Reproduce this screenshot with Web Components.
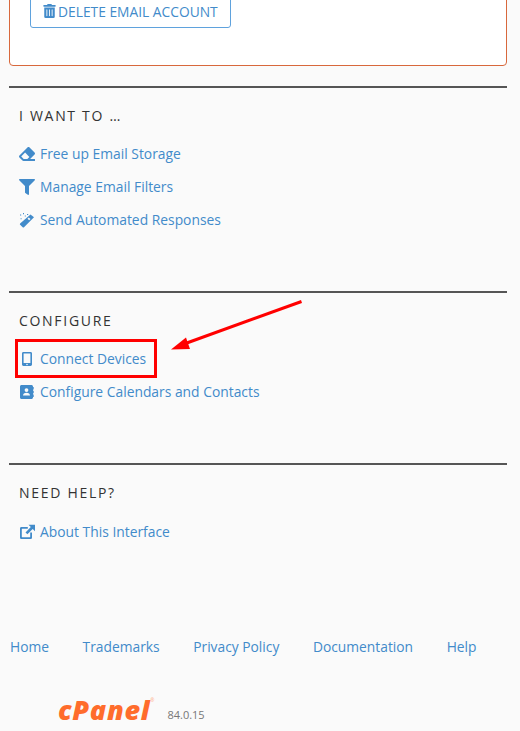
<!DOCTYPE html>
<html lang="en">
<head>
<meta charset="UTF-8">
<title>Email Account</title>
<style>
  html, body { margin: 0; height: 731px; overflow: hidden; background: #fafafa; }
  body { font-family: "Open Sans", sans-serif; font-size: 13.85px; position: relative; }
</style>
</head>
<body>

<danger-card>
  <action-button>
    <svg slot="icon" viewBox="0 0 448 512"><path d="M32 464a48 48 0 0 0 48 48h288a48 48 0 0 0 48-48V128H32zm272-256a16 16 0 0 1 32 0v224a16 16 0 0 1-32 0zm-96 0a16 16 0 0 1 32 0v224a16 16 0 0 1-32 0zm-96 0a16 16 0 0 1 32 0v224a16 16 0 0 1-32 0zM432 32H312l-9.4-18.7A24 24 0 0 0 281.1 0H166.8a23.72 23.72 0 0 0-21.4 13.3L136 32H16A16 16 0 0 0 0 48v32a16 16 0 0 0 16 16h416a16 16 0 0 0 16-16V48a16 16 0 0 0-16-16z"/></svg>
    DELETE EMAIL ACCOUNT
  </action-button>
</danger-card>

<side-section heading="I WANT TO …" style="height:205px">
  <icon-link>
    <svg slot="icon" viewBox="0 0 512 512"><path d="M497.941 273.941c18.745-18.745 18.745-49.137 0-67.882l-160-160c-18.745-18.745-49.136-18.746-67.883 0l-256 256c-18.745 18.745-18.745 49.137 0 67.882l96 96A48.004 48.004 0 0 0 144 480h356c6.627 0 12-5.373 12-12v-40c0-6.627-5.373-12-12-12H355.883l142.058-142.059zm-302.627-62.627l137.373 137.373L265.373 416H150.628l-80-80 124.686-124.686z"/></svg>
    Free up Email Storage
  </icon-link>
  <icon-link>
    <svg slot="icon" viewBox="0 0 512 512"><path d="M487.976 0H24.028C2.71 0-8.047 25.866 7.058 40.971L192 225.941V432c0 7.831 3.821 15.17 10.237 19.662l80 55.98C298.02 518.69 320 507.493 320 487.98V225.941l184.947-184.97C520.021 25.896 509.338 0 487.976 0z"/></svg>
    Manage Email Filters
  </icon-link>
  <icon-link>
    <svg slot="icon" viewBox="0 0 16 16"><path d="M11.500 2.400 15 5.200 5 15.200a1 1 0 0 1-1.300 0L1.100 12.800a1 1 0 0 1 0-1.300z"/><path d="M1 2.400h1.200v1H1zM4 1h1v1.200H4zM8 2h1.200v1H8zM5.800 3.400h1v1h-1zM1.600 6.200h1v1h-1z"/><path d="M9.700 5.600 11.500 7 10.200 8.300 8.500 6.800z" fill="#fafafa"/></svg>
    Send Automated Responses
  </icon-link>
</side-section>

<side-section heading="CONFIGURE" style="height:172px">
  <icon-link>
    <svg slot="icon" viewBox="0 0 16 16"><path fill-rule="evenodd" d="M4.400 1h7.200C12.400 1 13 1.600 13 2.400v11.200c0 .8-.6 1.400-1.400 1.400H4.400C3.600 15 3 14.400 3 13.600V2.400C3 1.600 3.600 1 4.400 1zM4.600 2.600v9.400h6.800V2.600zM8 12.700a.8.800 0 1 0 0 1.600.8.800 0 0 0 0-1.600z"/></svg>
    Connect Devices
  </icon-link>
  <icon-link>
    <svg slot="icon" viewBox="0 0 16 16"><path fill-rule="evenodd" d="M2.500 1h10C13.200 1 14 1.700 14 2.500v11c0 .8-.8 1.500-1.500 1.500h-10C1.700 15 1 14.300 1 13.500v-11C1 1.700 1.700 1 2.500 1zM7.500 4.200a1.900 1.900 0 1 0 0 3.800 1.900 1.900 0 0 0 0-3.800zM4 11.600h7c0-1.900-1.300-2.900-3.500-2.900S4 9.700 4 11.600z"/><path d="M14 3h.7v2.500H14zM14 6.700h.7v2.500H14zM14 10.400h.7v2.500H14z"/></svg>
    Configure Calendars and Contacts
  </icon-link>
</side-section>

<side-section heading="NEED HELP?" style="height:173px">
  <icon-link style="margin-top:1px">
    <svg slot="icon" viewBox="0 0 16 16"><path d="M2.400 3h6.400v1.800H3.200a.4.400 0 0 0-.4.400v7.600c0 .2.200.4.400.4h7.600c.2 0 .4-.2.400-.4V8.500H13v4.900c0 .9-.7 1.600-1.600 1.600H2.600C1.700 15 1 14.300 1 13.400V4.400C1 3.600 1.600 3 2.400 3z"/><path d="M9.500 0.800H16V7.300L13.700 5 8.400 10.300 6.500 8.400 11.800 3.100z"/></svg>
    About This Interface
  </icon-link>
</side-section>

<page-footer version="84.0.15">
  <a href="#">Home</a>
  <a href="#">Trademarks</a>
  <a href="#">Privacy Policy</a>
  <a href="#">Documentation</a>
  <a href="#">Help</a>
</page-footer>

<red-callout></red-callout>

<script>
  class DangerCard extends HTMLElement
  {
    constructor()
    {
      super();
      this.attachShadow({mode:'open'}).innerHTML = `
        <style>
          :host{
            display: block;
            box-sizing: border-box;
            height: 126px;
            margin: -60px 13px 20px 9px;
            padding: 60px 0 0 20px;
            background: #fff;
            border: 1px solid #d8683c;
            border-radius: 4px;
          }
        </style>
        <slot></slot>`;
    }
  }
  customElements.define('danger-card',DangerCard);

  class ActionButton extends HTMLElement
  {
    constructor()
    {
      super();
      this.attachShadow({mode:'open'}).innerHTML = `
        <style>
          :host{
            display: inline-flex;
            align-items: center;
            box-sizing: border-box;
            height: 34px;
            margin-top: -7px;
            padding: 0 12px;
            gap: 2px;
            color: #428bca;
            background: #fff;
            border: 1px solid #5fa2dd;
            border-radius: 3px;
            font-size: 13.8px;
            position: relative;
          }
          ::slotted(svg){ width: 13px; height: 14px; fill: #428bca; }
        </style>
        <slot name="icon"></slot><slot></slot>`;
    }
  }
  customElements.define('action-button',ActionButton);

  class SideSection extends HTMLElement
  {
    constructor()
    {
      super();
      this.attachShadow({mode:'open'}).innerHTML = `
        <style>
          :host{
            display: block;
            box-sizing: border-box;
            margin: 0 13px 0 9px;
            padding: 18px 10px 0;
            border-top: 2px solid #555;
          }
          h2{
            margin: 0 0 11px;
            font: 500 14px/20px "Open Sans", sans-serif;
            letter-spacing: 1.7px;
            color: #333;
          }
          .links{ display: flex; flex-direction: column; }
        </style>
        <h2></h2>
        <div class="links"><slot></slot></div>`;
      this.shadowRoot.querySelector('h2').textContent = this.getAttribute('heading');
    }
  }
  customElements.define('side-section',SideSection);

  class IconLink extends HTMLElement
  {
    constructor()
    {
      super();
      this.attachShadow({mode:'open'}).innerHTML = `
        <style>
          :host{
            display: flex;
            align-items: center;
            height: 33px;
            gap: 5px;
            color: #428bca;
            font-size: 13.85px;
          }
          ::slotted(svg){ width: 16px; height: 16px; fill: #428bca; flex: none; }
        </style>
        <slot name="icon"></slot><span><slot></slot></span>`;
    }
  }
  customElements.define('icon-link',IconLink);

  class PageFooter extends HTMLElement
  {
    constructor()
    {
      super();
      this.attachShadow({mode:'open'}).innerHTML = `
        <style>
          :host{ display: block; padding: 0 0 0 10px; }
          nav{ display: flex; gap: 33.6px; height: 20px; align-items: center; }
          ::slotted(a){ color: #428bca; text-decoration: none; font-size: 13.8px; }
          .brand{ display: flex; align-items: flex-end; margin: 39px 0 0 48px; }
          .logo{
            font: italic 800 27px/30px "Open Sans", sans-serif;
            letter-spacing: .7px;
            color: #ff6c2c;
          }
          .reg{ font-size: 5px; color: #ffb08c; align-self: flex-start; margin: 2px 0 0 0; }
          .version{ font-size: 11px; line-height: 20px; color: #777; margin-left: 13px; }
        </style>
        <nav><slot></slot></nav>
        <div class="brand">
          <span class="logo">cPanel</span><span class="reg">®</span>
          <span class="version"></span>
        </div>`;
      this.shadowRoot.querySelector('.version').textContent = this.getAttribute('version');
    }
  }
  customElements.define('page-footer',PageFooter);

  // the annotation drawn over the screenshot
  class RedCallout extends HTMLElement
  {
    constructor()
    {
      super();
      this.attachShadow({mode:'open'}).innerHTML = `
        <style>
          :host{ position: absolute; left: 0; top: 0; width: 520px; height: 731px; pointer-events: none; }
          svg{ display: block; }
        </style>
        <svg width="520" height="731" viewBox="0 0 520 731">
          <rect x="16.500" y="340.500" width="139" height="36" fill="none" stroke="#f00" stroke-width="3"/>
          <path d="M301.500 301.500 184 344" stroke="#f00" stroke-width="3" fill="none"/>
          <path d="M171 349.500 186 337.500 190 349z" fill="#f00"/>
        </svg>`;
    }
  }
  customElements.define('red-callout',RedCallout);
</script>
</body>
</html>
